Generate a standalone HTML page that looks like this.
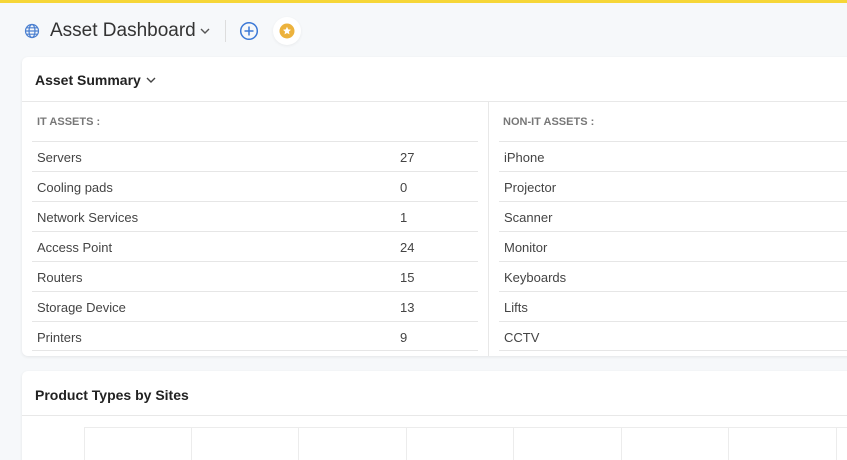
<!DOCTYPE html>
<html style="width:847px;height:460px;overflow:hidden"><head><meta charset="utf-8"><style>
*{box-sizing:border-box;margin:0;padding:0}
body{width:847px;height:460px;overflow:hidden;background:#f6f8fa;font-family:"Liberation Sans",sans-serif;position:relative;color:#333}
.top{position:absolute;left:0;top:0;width:847px;height:3px;background:#f6d637}
.hdr{position:absolute;top:18px;left:24px;height:26px;display:flex;align-items:center}
.title{font-size:19px;color:#333;margin-left:10px}
.card{position:absolute;left:22px;width:840px;background:#fff;border-radius:6px;box-shadow:0 1px 3px rgba(0,0,0,.08)}
.ct{position:absolute;left:13px;font-size:14px;font-weight:bold;color:#222}
.lbl{position:absolute;font-size:11px;font-weight:bold;color:#777}
.row{position:absolute;height:30px;border-top:1px solid #e6e6e6;font-size:13px;color:#444;line-height:31px;padding-left:5px}
.v{position:absolute;left:368px;top:0}
</style></head><body>
<div class="top"></div>
<div class="hdr">
<svg width="16" height="16" viewBox="0 0 16 16" fill="none" stroke="#4a7fd0" stroke-width="1.2"><circle cx="8" cy="8" r="6.5"/><ellipse cx="8" cy="8" rx="3" ry="6.5"/><path d="M1.5 8h13M2.5 4.8h11M2.5 11.2h11"/></svg>
<span class="title">Asset Dashboard</span>
<svg width="12" height="10" viewBox="0 0 12 10" style="margin-left:3px"><path d="M2 3l4 4 4-4" fill="none" stroke="#555" stroke-width="1.4"/></svg>
<div style="width:1px;height:22px;background:#ddd;margin-left:14px"></div>
<svg width="20" height="20" viewBox="0 0 20 20" style="margin-left:13px" fill="none" stroke="#3b78d6" stroke-width="1.5"><circle cx="10" cy="10" r="8.3"/><path d="M10 5.5v9M5.5 10h9"/></svg>
<div style="width:28px;height:28px;border-radius:50%;background:#fff;margin-left:14px;display:flex;align-items:center;justify-content:center;box-shadow:0 1px 3px rgba(0,0,0,.06)">
<svg width="16" height="16" viewBox="0 0 16 16"><circle cx="8" cy="8" r="7.5" fill="#ecb23c"/><path d="M8 3.8l1.2 2.6 2.8.3-2.1 1.9.6 2.8L8 10l-2.5 1.4.6-2.8L4 6.7l2.8-.3z" fill="#fff"/></svg></div>
</div>

<div class="card" style="top:57px;height:299px">
<div class="ct" style="top:15px">Asset Summary <svg width="12" height="10" viewBox="0 0 12 10"><path d="M2 3l4 4 4-4" fill="none" stroke="#444" stroke-width="1.4"/></svg></div>
<div style="position:absolute;left:0;right:0;top:44px;height:1px;background:#e8e8e8"></div>
<div style="position:absolute;left:466px;top:45px;bottom:0;width:1px;background:#e8e8e8"></div>
<div class="lbl" style="left:15px;top:59px">IT ASSETS :</div>
<div class="lbl" style="left:481px;top:59px">NON-IT ASSETS :</div>
</div>

<div class="card" style="top:371px;height:100px">
<div class="ct" style="top:16px">Product Types by Sites</div>
<div style="position:absolute;left:0;right:0;top:44px;height:1px;background:#e8e8e8"></div>
<div style="position:absolute;left:62px;right:0;top:56px;height:1px;background:#ececec"></div>
</div>
<div style="position:absolute;top:427px;left:0;width:847px;height:33px;overflow:hidden">
<div style="position:absolute;left:84px;width:1px;height:40px;background:#ececec"></div>
<div style="position:absolute;left:191px;width:1px;height:40px;background:#ececec"></div>
<div style="position:absolute;left:298px;width:1px;height:40px;background:#ececec"></div>
<div style="position:absolute;left:406px;width:1px;height:40px;background:#ececec"></div>
<div style="position:absolute;left:513px;width:1px;height:40px;background:#ececec"></div>
<div style="position:absolute;left:621px;width:1px;height:40px;background:#ececec"></div>
<div style="position:absolute;left:728px;width:1px;height:40px;background:#ececec"></div>
<div style="position:absolute;left:836px;width:1px;height:40px;background:#ececec"></div>
</div>

<div class="row" style="left:32px;width:446px;top:141px">Servers<span class="v">27</span></div>
<div class="row" style="left:32px;width:446px;top:171px">Cooling pads<span class="v">0</span></div>
<div class="row" style="left:32px;width:446px;top:201px">Network Services<span class="v">1</span></div>
<div class="row" style="left:32px;width:446px;top:231px">Access Point<span class="v">24</span></div>
<div class="row" style="left:32px;width:446px;top:261px">Routers<span class="v">15</span></div>
<div class="row" style="left:32px;width:446px;top:291px">Storage Device<span class="v">13</span></div>
<div class="row" style="left:32px;width:446px;top:321px;border-bottom:1px solid #e6e6e6">Printers<span class="v">9</span></div>

<div class="row" style="left:499px;width:348px;top:141px">iPhone</div>
<div class="row" style="left:499px;width:348px;top:171px">Projector</div>
<div class="row" style="left:499px;width:348px;top:201px">Scanner</div>
<div class="row" style="left:499px;width:348px;top:231px">Monitor</div>
<div class="row" style="left:499px;width:348px;top:261px">Keyboards</div>
<div class="row" style="left:499px;width:348px;top:291px">Lifts</div>
<div class="row" style="left:499px;width:348px;top:321px;border-bottom:1px solid #e6e6e6">CCTV</div>
</body></html>
